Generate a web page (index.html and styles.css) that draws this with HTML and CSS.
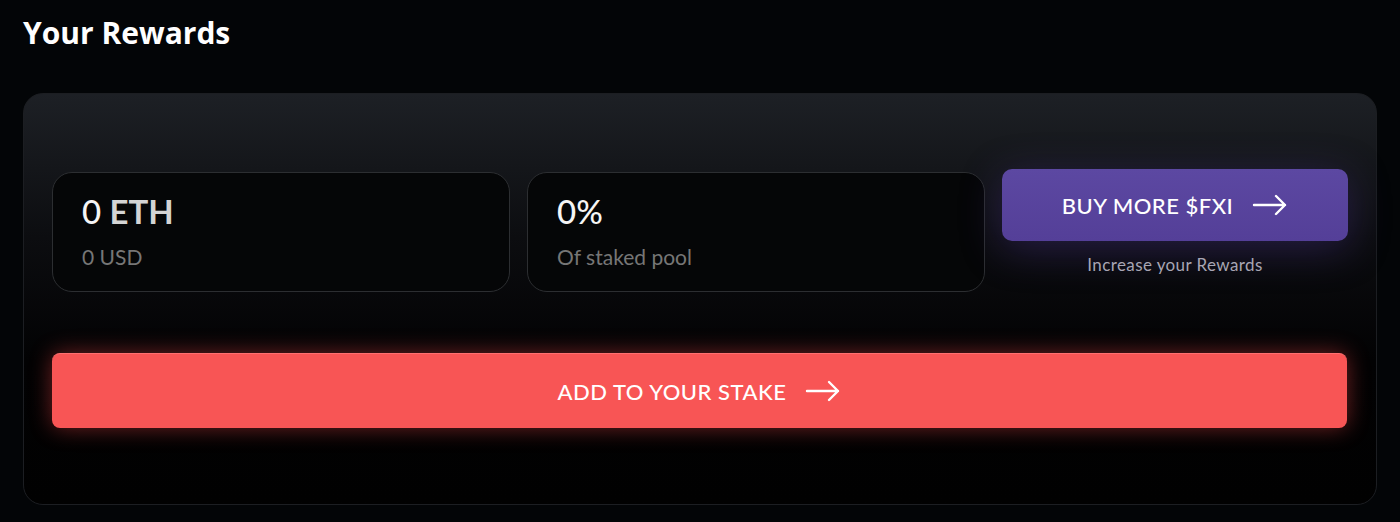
FILE: index.html
```html
<!DOCTYPE html>
<html lang="en">
<head>
    <meta charset="UTF-8">
    <meta name="viewport" content="width=device-width, initial-scale=1.0">
    <title>Your Rewards</title>
    <link rel="stylesheet" href="styles.css">
</head>
<body>
    <h1 class="title">Your Rewards</h1>

    <section class="card">
        <div class="stats">
            <div class="stat">
                <div class="stat-value">0 <span class="unit">ETH</span></div>
                <div class="stat-label">0 USD</div>
            </div>
            <div class="stat">
                <div class="stat-value">0%</div>
                <div class="stat-label">Of staked pool</div>
            </div>
            <div class="buy">
                <button class="btn btn-buy" type="button">
                    BUY MORE $FXI
                    <svg class="arrow" width="36" height="22" viewBox="0 0 36 22" fill="none" stroke="#fff" stroke-width="2.4" stroke-linecap="round" stroke-linejoin="round"><path d="M2 11h31M24 2l9 9-9 9"/></svg>
                </button>
                <p class="buy-note">Increase your Rewards</p>
            </div>
        </div>

        <button class="btn btn-stake" type="button">
            ADD TO YOUR STAKE
            <svg class="arrow" width="36" height="22" viewBox="0 0 36 22" fill="none" stroke="#fff" stroke-width="2.4" stroke-linecap="round" stroke-linejoin="round"><path d="M2 11h31M24 2l9 9-9 9"/></svg>
        </button>
    </section>
</body>
</html>
```

FILE: styles.css
```css
body { margin: 0; padding: 0 23px; background: #030507; color: #fff; font-family: Lato, "Noto Sans", sans-serif; }
.title { margin: 0; padding-top: 15px; font-family: "Open Sans", Lato, sans-serif; font-size: 30px; font-weight: 700; line-height: 36px; letter-spacing: 0; }
.card { margin-top: 42px; padding: 75px 29px 76px 28px; border: 1px solid #1c1e22; border-radius: 20px; background: linear-gradient(180deg, #1d2025 0%, #0c0d10 35%, #020203 65%, #010101 100%); }
.stats { display: grid; grid-template-columns: 458px 458px 346px; gap: 17px; align-items: start; }
.stat { margin-top: 3px; height: 120px; box-sizing: border-box; padding: 17px 29px; border: 1px solid #2c2e31; border-radius: 20px; background: #050607; }
.stat-value { font-size: 33px; font-weight: 500; line-height: 42px; color: #f5f5f5; }
.unit { color: #d4d4d4; font-weight: 700; }
.stat-label { margin-top: 12px; font-size: 21px; line-height: 26px; color: #767676; }
.buy { text-align: center; }
.btn { display: flex; align-items: center; justify-content: center; gap: 19px; width: 100%; border: none; color: #fff; font-family: inherit; font-size: 22px; font-weight: 500; letter-spacing: 0.5px; cursor: pointer; }
.btn-buy { height: 72px; border-radius: 10px; background: linear-gradient(180deg, #5c48a2 0%, #543f98 100%); box-shadow: 0 8px 40px rgba(90, 60, 170, 0.35); }
.buy-note { margin: 13px 0 0; font-size: 17px; color: #a8a6b4; letter-spacing: 0.4px; }
.btn-stake { margin-top: 61px; height: 75px; border-radius: 8px; border-top: 1px solid #ff7070; background: #f85555; box-shadow: 0 0 22px rgba(248, 70, 70, 0.45); }
.arrow { flex: none; }
```
